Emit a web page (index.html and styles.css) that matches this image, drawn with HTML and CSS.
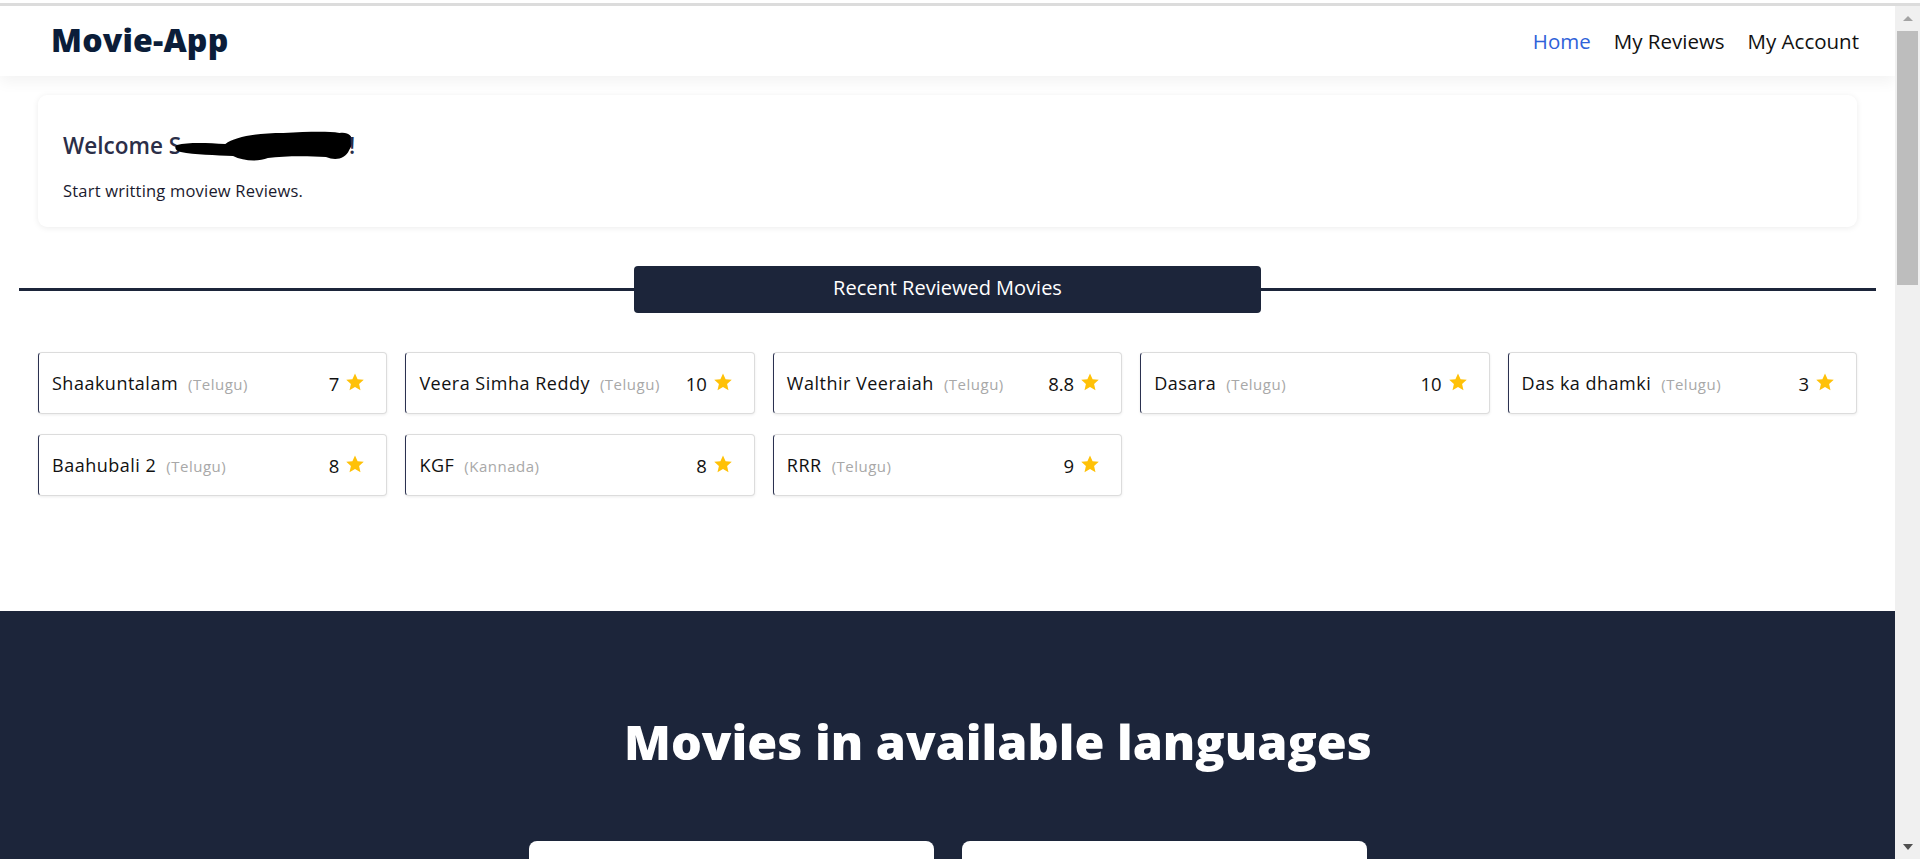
FILE: index.html
```html
<!DOCTYPE html>
<html lang="en">
<head>
<meta charset="utf-8">
<title>Movie-App</title>
<link rel="stylesheet" href="styles.css">
</head>
<body>
<div class="chrome-edge"></div>
<div class="window">
  <div class="viewport">
    <header class="topbar">
      <div class="logo">Movie-App</div>
      <nav class="nav">
        <a class="nav-link active">Home</a>
        <a class="nav-link">My Reviews</a>
        <a class="nav-link">My Account</a>
      </nav>
    </header>

    <main class="main">
      <section class="welcome-card">
        <h2 class="welcome-title">Welcome S<svg class="redact" width="180" height="32" viewBox="0 0 186 32" preserveAspectRatio="none"><path d="M2,15 C14,12 34,13 52,14 C62,7 84,3 112,3 C136,2 156,1 170,3 C184,1 186,12 180,20 C176,29 166,31 156,27 C136,26 112,26 96,28 C86,32 70,31 60,26 C42,25 20,25 6,22 C0,21 -1,17 2,15 Z" fill="#000"/></svg>!</h2>
        <p class="welcome-text">Start writting moview Reviews.</p>
      </section>

      <div class="divider">
        <span class="divider-line"></span>
        <div class="divider-label">Recent Reviewed Movies</div>
        <span class="divider-line"></span>
      </div>

      <div class="movie-grid">
        <div class="movie-card"><div class="movie-info"><span class="movie-name">Shaakuntalam</span><span class="movie-lang">(Telugu)</span></div><div class="movie-rating">7<svg class="star" viewBox="0 0 24 24"><path d="M12 1.8l3.1 6.9 7.4.7-5.6 5 1.7 7.4L12 18l-6.6 3.8 1.7-7.4-5.6-5 7.4-.7z"/></svg></div></div>
        <div class="movie-card"><div class="movie-info"><span class="movie-name">Veera Simha Reddy</span><span class="movie-lang">(Telugu)</span></div><div class="movie-rating">10<svg class="star" viewBox="0 0 24 24"><path d="M12 1.8l3.1 6.9 7.4.7-5.6 5 1.7 7.4L12 18l-6.6 3.8 1.7-7.4-5.6-5 7.4-.7z"/></svg></div></div>
        <div class="movie-card"><div class="movie-info"><span class="movie-name">Walthir Veeraiah</span><span class="movie-lang">(Telugu)</span></div><div class="movie-rating">8.8<svg class="star" viewBox="0 0 24 24"><path d="M12 1.8l3.1 6.9 7.4.7-5.6 5 1.7 7.4L12 18l-6.6 3.8 1.7-7.4-5.6-5 7.4-.7z"/></svg></div></div>
        <div class="movie-card"><div class="movie-info"><span class="movie-name">Dasara</span><span class="movie-lang">(Telugu)</span></div><div class="movie-rating">10<svg class="star" viewBox="0 0 24 24"><path d="M12 1.8l3.1 6.9 7.4.7-5.6 5 1.7 7.4L12 18l-6.6 3.8 1.7-7.4-5.6-5 7.4-.7z"/></svg></div></div>
        <div class="movie-card"><div class="movie-info"><span class="movie-name">Das ka dhamki</span><span class="movie-lang">(Telugu)</span></div><div class="movie-rating">3<svg class="star" viewBox="0 0 24 24"><path d="M12 1.8l3.1 6.9 7.4.7-5.6 5 1.7 7.4L12 18l-6.6 3.8 1.7-7.4-5.6-5 7.4-.7z"/></svg></div></div>
        <div class="movie-card"><div class="movie-info"><span class="movie-name">Baahubali 2</span><span class="movie-lang">(Telugu)</span></div><div class="movie-rating">8<svg class="star" viewBox="0 0 24 24"><path d="M12 1.8l3.1 6.9 7.4.7-5.6 5 1.7 7.4L12 18l-6.6 3.8 1.7-7.4-5.6-5 7.4-.7z"/></svg></div></div>
        <div class="movie-card"><div class="movie-info"><span class="movie-name">KGF</span><span class="movie-lang">(Kannada)</span></div><div class="movie-rating">8<svg class="star" viewBox="0 0 24 24"><path d="M12 1.8l3.1 6.9 7.4.7-5.6 5 1.7 7.4L12 18l-6.6 3.8 1.7-7.4-5.6-5 7.4-.7z"/></svg></div></div>
        <div class="movie-card"><div class="movie-info"><span class="movie-name">RRR</span><span class="movie-lang">(Telugu)</span></div><div class="movie-rating">9<svg class="star" viewBox="0 0 24 24"><path d="M12 1.8l3.1 6.9 7.4.7-5.6 5 1.7 7.4L12 18l-6.6 3.8 1.7-7.4-5.6-5 7.4-.7z"/></svg></div></div>
      </div>
    </main>

    <section class="languages">
      <h1 class="languages-title">Movies in available languages</h1>
      <div class="language-cards">
        <div class="language-card"></div>
        <div class="language-card"></div>
      </div>
    </section>
  </div>

  <div class="scrollbar">
    <div class="sb-btn"><span class="arrow-up"></span></div>
    <div class="sb-thumb"></div>
    <div class="sb-track"></div>
    <div class="sb-btn"><span class="arrow-down"></span></div>
  </div>
</div>
</body>
</html>
```

FILE: styles.css
```css
* { box-sizing: border-box; }

html, body {
  margin: 0;
  padding: 0;
  height: 859px;
  overflow: hidden;
  background: #ffffff;
  font-family: "Open Sans", "Noto Sans", sans-serif;
}

.chrome-edge {
  height: 6px;
  border-top: 3px solid #ffffff;
  background: #dcdcdc;
}

.window {
  display: flex;
  height: 853px;
}

.viewport {
  flex: 1;
  overflow: hidden;
  background: #ffffff;
}

/* Header */
.topbar {
  height: 70px;
  display: flex;
  align-items: center;
  justify-content: space-between;
  padding: 0 36px 0 51px;
  background: #ffffff;
  box-shadow: 0 6px 14px rgba(0, 0, 0, 0.05);
  position: relative;
  z-index: 1;
}

.logo {
  font-size: 32px;
  font-weight: 800;
  color: #0b1d39;
  margin-bottom: 3px;
  letter-spacing: 0.2px;
}

.nav {
  display: flex;
  gap: 23px;
}

.nav-link {
  font-size: 20.5px;
  color: #111111;
  text-decoration: none;
}

.nav-link.active {
  color: #2f62d9;
}

/* Main */
.main {
  padding: 19px 38px 0;
}

.welcome-card {
  background: #ffffff;
  border-radius: 9px;
  box-shadow: 0 1px 6px rgba(0, 0, 0, 0.08);
  padding: 35px 25px 28px;
  height: 132px;
}

.welcome-title {
  margin: 0;
  font-size: 22.5px;
  font-weight: 600;
  color: #2b2e48;
  line-height: 30px;
}

.redact {
  vertical-align: -8px;
  margin-left: -6px;
  margin-right: -6px;
}

.welcome-text {
  margin: 19px 0 0;
  font-size: 16.5px;
  letter-spacing: 0.2px;
  line-height: 20px;
  color: #1a1a2e;
}

/* Divider */
.divider {
  display: flex;
  align-items: center;
  margin: 39px -19px 0;
}

.divider-line {
  flex: 1;
  height: 3px;
  background: #1c253a;
}

.divider-label {
  width: 627px;
  height: 47px;
  display: flex;
  align-items: center;
  justify-content: center;
  padding-bottom: 5px;
  background: #1c253a;
  border-radius: 4px;
  color: #ffffff;
  font-size: 20px;
}

/* Movie grid */
.movie-grid {
  display: grid;
  grid-template-columns: repeat(5, 1fr);
  column-gap: 18px;
  row-gap: 20px;
  margin-top: 39px;
}

.movie-card {
  height: 62px;
  display: flex;
  align-items: center;
  justify-content: space-between;
  padding: 0 21px 0 13px;
  border: 1px solid #dcdcdc;
  border-left-color: #2b3150;
  border-radius: 4px;
  box-shadow: 0 1px 3px rgba(0, 0, 0, 0.08);
  background: #ffffff;
}

.movie-info {
  display: flex;
  align-items: baseline;
  gap: 10px;
}

.movie-name {
  font-size: 18px;
  letter-spacing: 0.5px;
  color: #111111;
}

.movie-lang {
  font-size: 15px;
  letter-spacing: 0.5px;
  color: #a8a8a8;
}

.movie-rating {
  display: flex;
  align-items: center;
  gap: 6px;
  font-size: 18.5px;
  color: #111111;
}

.star {
  width: 20px;
  height: 20px;
  fill: #ffc107;
  margin-top: -2px;
}

/* Languages section */
.languages {
  margin-top: 115px;
  background: #1c253a;
  padding-top: 98px;
  height: 300px;
}

.languages-title {
  margin: 0;
  padding-left: 101px;
  text-align: center;
  font-size: 48.5px;
  line-height: 64px;
  font-weight: 800;
  color: #ffffff;
}

.language-cards {
  display: flex;
  justify-content: center;
  gap: 28px;
  margin-top: 68px;
}

.language-card {
  width: 405px;
  height: 120px;
  background: #ffffff;
  border-radius: 8px;
}

/* Scrollbar */
.scrollbar {
  width: 25px;
  background: #f0f0f0;
  display: flex;
  flex-direction: column;
}

.sb-btn {
  height: 25px;
  display: flex;
  align-items: center;
  justify-content: center;
}

.sb-thumb {
  height: 254px;
  margin: 0 2px;
  background: #bdbdbd;
}

.sb-track {
  flex: 1;
}

.arrow-up {
  width: 0;
  height: 0;
  border-left: 5.5px solid transparent;
  border-right: 5.5px solid transparent;
  border-bottom: 5px solid #a3a3a3;
}

.arrow-down {
  width: 0;
  height: 0;
  border-left: 5.5px solid transparent;
  border-right: 5.5px solid transparent;
  border-top: 6px solid #505050;
}
```
